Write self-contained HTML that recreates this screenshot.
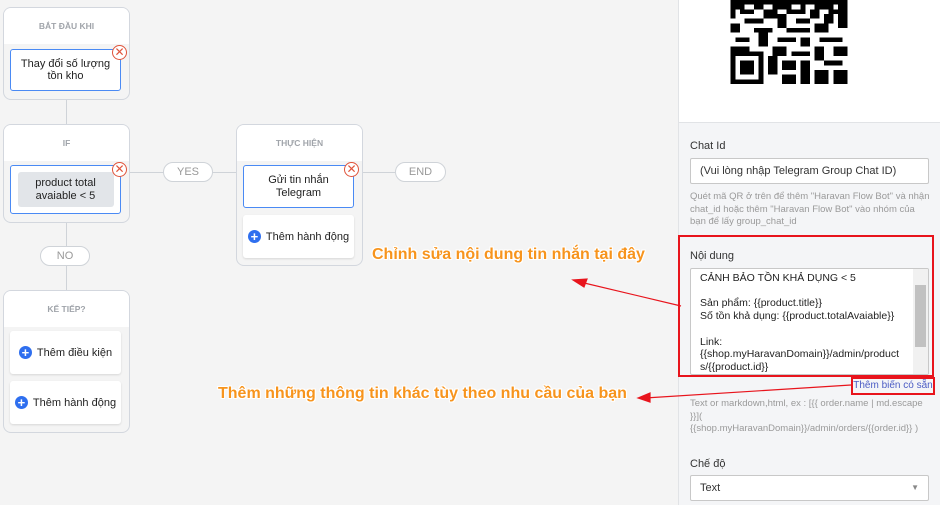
<!DOCTYPE html>
<html><head><meta charset="utf-8"><style>
*{box-sizing:border-box;margin:0;padding:0}
body{width:940px;height:505px;overflow:hidden;background:#f4f4f4;font-family:"Liberation Sans",Arial,sans-serif;position:relative;color:#222}
.abs{position:absolute}
.card{position:absolute;background:#f4f4f4;border:1px solid #d3d7de;border-radius:8px;overflow:hidden}
.card .hd{background:#fff;height:36px;text-align:center;font-size:8.5px;font-weight:bold;color:#a0a4aa;line-height:36px}
.box{position:absolute;background:#fff;border:1px solid #4a8af4;border-radius:3px;font-size:11px;text-align:center;display:flex;align-items:center;justify-content:center;line-height:12.5px}
.btn{position:absolute;background:#fff;border-radius:3px;box-shadow:0 1px 2px rgba(0,0,0,.12);font-size:11px;display:flex;align-items:center;justify-content:center}
.plus{display:inline-block;width:13px;height:13px;border-radius:50%;background:#2f6fef;color:#fff;font-size:13px;line-height:13px;text-align:center;font-weight:bold;margin-right:5px}
.x{position:absolute;width:15px;height:15px;border:1.5px solid #e0533a;border-radius:50%;background:#fff;color:#e0533a;font-size:12px;line-height:12px;text-align:center}
.pill{position:absolute;height:20px;border:1px solid #cfd3d8;border-radius:10px;background:#fff;font-size:11px;color:#999;text-align:center;line-height:18px}
.ln{position:absolute;background:#cfd3d8}
.lab{position:absolute;font-size:11px;color:#333}
.inp{position:absolute;background:#fff;border:1px solid #c8c8c8;border-radius:2px;font-size:11.5px;padding-left:9px}
.help{position:absolute;font-size:9.5px;color:#9a9a9a;line-height:12.5px;white-space:nowrap}
.ann{position:absolute;font-size:16px;font-weight:bold;color:#f7941d;text-shadow:0 0 1px #fff,1px 1px 0 #fff,-1px -1px 0 #fff,1px -1px 0 #fff,-1px 1px 0 #fff,0 1px 0 #fff,0 -1px 0 #fff,1px 0 0 #fff,-1px 0 0 #fff;white-space:nowrap}
</style></head><body>

<div class="ln" style="left:66px;top:99px;width:1px;height:25px"></div>
<div class="ln" style="left:66px;top:222px;width:1px;height:68px"></div>
<div class="ln" style="left:129px;top:172px;width:107px;height:1px"></div>
<div class="ln" style="left:362px;top:172px;width:33px;height:1px"></div>

<div class="card" style="left:3px;top:7px;width:127px;height:93px"><div class="hd">BẮT ĐẦU KHI</div></div>
<div class="box" style="left:10px;top:49px;width:111px;height:42px">Thay đổi số lượng<br>tồn kho</div>
<div class="x" style="left:112px;top:45px">✕</div>

<div class="card" style="left:3px;top:124px;width:127px;height:99px"><div class="hd">IF</div></div>
<div class="box" style="left:10px;top:165px;width:111px;height:49px"><div style="background:#e2e5e9;border-radius:3px;width:96px;height:35px;display:flex;align-items:center;justify-content:center">product total<br>avaiable &lt; 5</div></div>
<div class="x" style="left:112px;top:162px">✕</div>

<div class="pill" style="left:163px;top:162px;width:50px">YES</div>

<div class="card" style="left:236px;top:124px;width:127px;height:142px"><div class="hd">THỰC HIỆN</div></div>
<div class="box" style="left:243px;top:165px;width:111px;height:43px">Gửi tin nhắn<br>Telegram</div>
<div class="x" style="left:344px;top:162px">✕</div>
<div class="btn" style="left:243px;top:215px;width:111px;height:43px"><span class="plus">+</span>Thêm hành động</div>

<div class="pill" style="left:395px;top:162px;width:51px">END</div>
<div class="pill" style="left:40px;top:246px;width:50px">NO</div>

<div class="card" style="left:3px;top:290px;width:127px;height:143px"><div class="hd">KẾ TIẾP?</div></div>
<div class="btn" style="left:10px;top:331px;width:111px;height:43px"><span class="plus">+</span>Thêm điều kiện</div>
<div class="btn" style="left:10px;top:381px;width:111px;height:43px"><span class="plus">+</span>Thêm hành động</div>

<div class="abs" style="left:678px;top:0;width:262px;height:505px;background:#f4f5f7;border-left:1px solid #e1e3e6"></div>
<div class="abs" style="left:679px;top:0;width:261px;height:123px;background:#fff;border-bottom:1px solid #e1e3e6"></div>
<svg class="abs" style="left:730px;top:0" width="118" height="84" viewBox="0 0 25 18" shape-rendering="crispEdges">
<g fill="#000">
<rect x="0" y="0" width="25" height="1"/>
<rect x="0" y="1" width="3" height="1"/><rect x="5" y="1" width="2" height="1"/><rect x="9" y="1" width="4" height="1"/><rect x="15" y="1" width="1" height="1"/><rect x="18" y="1" width="4" height="1"/><rect x="23" y="1" width="2" height="1"/>
<rect x="0" y="2" width="1" height="2"/><rect x="2" y="2" width="3" height="1"/><rect x="7" y="2" width="3" height="2"/><rect x="12" y="2" width="4" height="1"/><rect x="17" y="2" width="2" height="2"/><rect x="21" y="2" width="4" height="1"/>
<rect x="3" y="4" width="4" height="1"/><rect x="10" y="3" width="2" height="3"/><rect x="14" y="4" width="3" height="1"/><rect x="20" y="3" width="2" height="2"/><rect x="23" y="3" width="2" height="3"/>
<rect x="0" y="5" width="2" height="2"/><rect x="5" y="6" width="4" height="1"/><rect x="12" y="6" width="5" height="1"/><rect x="18" y="5" width="3" height="2"/>
<rect x="1" y="8" width="3" height="1"/><rect x="6" y="7" width="2" height="3"/><rect x="10" y="8" width="4" height="1"/><rect x="15" y="8" width="2" height="2"/><rect x="19" y="8" width="5" height="1"/>
<rect x="0" y="10" width="4" height="1"/><rect x="9" y="10" width="3" height="2"/><rect x="13" y="11" width="4" height="1"/><rect x="18" y="10" width="2" height="3"/><rect x="22" y="10" width="3" height="2"/>
<rect x="0" y="11" width="7" height="7"/><rect x="8" y="12" width="2" height="4"/><rect x="11" y="13" width="3" height="2"/><rect x="15" y="13" width="2" height="5"/><rect x="20" y="13" width="4" height="1"/><rect x="11" y="16" width="3" height="2"/><rect x="18" y="15" width="3" height="3"/><rect x="22" y="15" width="3" height="3"/>
</g>
<rect x="1" y="12" width="5" height="5" fill="#fff"/><rect x="2" y="13" width="3" height="3" fill="#000"/>
</svg>

<div class="lab" style="left:690px;top:140px">Chat Id</div>
<div class="inp" style="left:690px;top:158px;width:239px;height:26px;line-height:24px;color:#333;font-size:11px">(Vui lòng nhập Telegram Group Chat ID)</div>
<div class="help" style="left:690px;top:191px">Quét mã QR ở trên để thêm "Haravan Flow Bot" và nhận<br>chat_id hoặc thêm "Haravan Flow Bot" vào nhóm của<br>bạn để lấy group_chat_id</div>

<div class="abs" style="left:678px;top:235px;width:256px;height:142px;border:2px solid #e8141c"></div>
<div class="lab" style="left:690px;top:250px">Nội dung</div>
<div class="inp" style="left:690px;top:268px;width:239px;height:107px;font-size:10.5px;line-height:12.7px;padding-top:3px;color:#222;overflow:hidden">CẢNH BẢO TỒN KHẢ DỤNG &lt; 5<br><br>Sản phẩm: {{product.title}}<br>Số tồn khả dụng: {{product.totalAvaiable}}<br><br>Link:<br>{{shop.myHaravanDomain}}/admin/product<br>s/{{product.id}}
<div class="abs" style="right:0;top:0;width:15px;height:105px;background:#f1f1f1"><div style="margin:16px 2px 0;height:62px;background:#c1c1c1"></div></div></div>
<div class="abs" style="left:851px;top:377px;width:84px;height:18px;border:2px solid #e8141c;font-size:10px;color:#4b5cc4;line-height:14px;text-align:center;white-space:nowrap">Thêm biến có sẵn</div>
<div class="help" style="left:690px;top:398px">Text or markdown,html, ex : [{{ order.name | md.escape<br>}}](<br>{{shop.myHaravanDomain}}/admin/orders/{{order.id}} )</div>

<div class="lab" style="left:690px;top:458px">Chế độ</div>
<div class="inp" style="left:690px;top:475px;width:239px;height:26px;line-height:24px;color:#333;font-size:11px">Text<span style="position:absolute;right:9px;top:0;color:#888;font-size:8px">▼</span></div>

<svg class="abs" style="left:0;top:0" width="940" height="505">
<g stroke="#e8141c" stroke-width="1.2" fill="#e8141c">
<line x1="681" y1="306" x2="580" y2="282"/>
<polygon points="573,280 587,279 584,287"/>
<line x1="851" y1="385" x2="645" y2="398"/>
<polygon points="638,398 650,393 650,402"/>
</g></svg>
<div class="ann" style="left:372px;top:246px">Chỉnh sửa nội dung tin nhắn tại đây</div>
<div class="ann" style="left:218px;top:385px">Thêm những thông tin khác tùy theo nhu cầu của bạn</div>
</body></html>
